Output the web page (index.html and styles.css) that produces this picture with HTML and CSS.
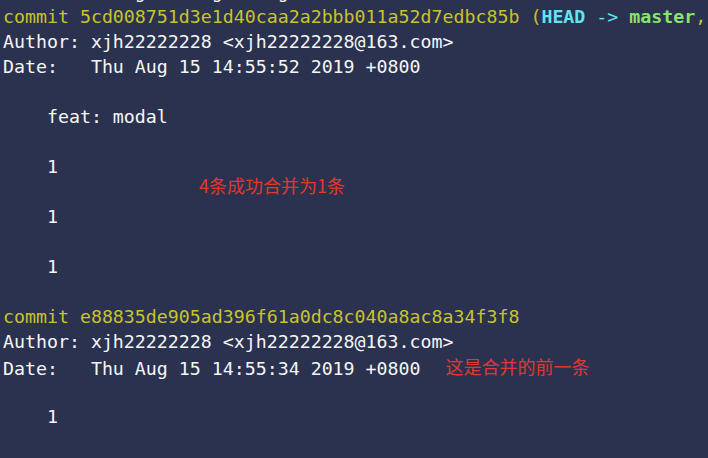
FILE: index.html
```html
<!DOCTYPE html>
<html>
<head>
<meta charset="utf-8">
<link rel="stylesheet" href="styles.css">
</head>
<body>
<div class="term">
<div class="line prev">            g      g     g</div>
<div class="line"><span class="y">commit 5cd008751d3e1d40caa2a2bbb011a52d7edbc85b (</span><span class="c b">HEAD</span><span class="c"> -&gt; </span><span class="g b">master</span><span class="y">,</span></div>
<div class="line">Author: xjh22222228 &lt;xjh22222228@163.com&gt;</div>
<div class="line">Date:   Thu Aug 15 14:55:52 2019 +0800</div>
<div class="line"> </div>
<div class="line">    feat: modal</div>
<div class="line"> </div>
<div class="line">    1</div>
<div class="line anchor"> <span class="note note1">4条成功合并为1条</span></div>
<div class="line">    1</div>
<div class="line"> </div>
<div class="line">    1</div>
<div class="line"> </div>
<div class="line"><span class="y">commit e88835de905ad396f61a0dc8c040a8ac8a34f3f8</span></div>
<div class="line">Author: xjh22222228 &lt;xjh22222228@163.com&gt;</div>
<div class="line">Date:   Thu Aug 15 14:55:34 2019 +0800<span class="note note2">这是合并的前一条</span></div>
<div class="line"> </div>
<div class="line">    1</div>
</div>
</body>
</html>
```
FILE: styles.css
```css
html, body {
  margin: 0;
  padding: 0;
  background: #2a3250;
  overflow: hidden;
}
.term {
  padding: 4px 0 0 3px;
  font-family: "DejaVu Sans Mono", monospace;
  font-size: 18.25px;
  line-height: 25px;
  color: #f6f6f6;
}
.line {
  height: 25px;
  white-space: pre;
}
.prev {
  margin-top: -25px;
}
.anchor {
  position: relative;
}
.y { color: #c9c32b; }
.c { color: #5ee5ee; }
.g { color: #88e46b; }
.b { font-weight: bold; }
.note {
  font-family: "Noto Sans CJK SC", sans-serif;
  font-size: 18px;
  color: #e0382f;
  white-space: nowrap;
}
.note1 {
  position: absolute;
  left: 196px;
  top: -6px;
  line-height: 25px;
}
.note2 {
  margin-left: 25px;
  vertical-align: 1px;
}
```
